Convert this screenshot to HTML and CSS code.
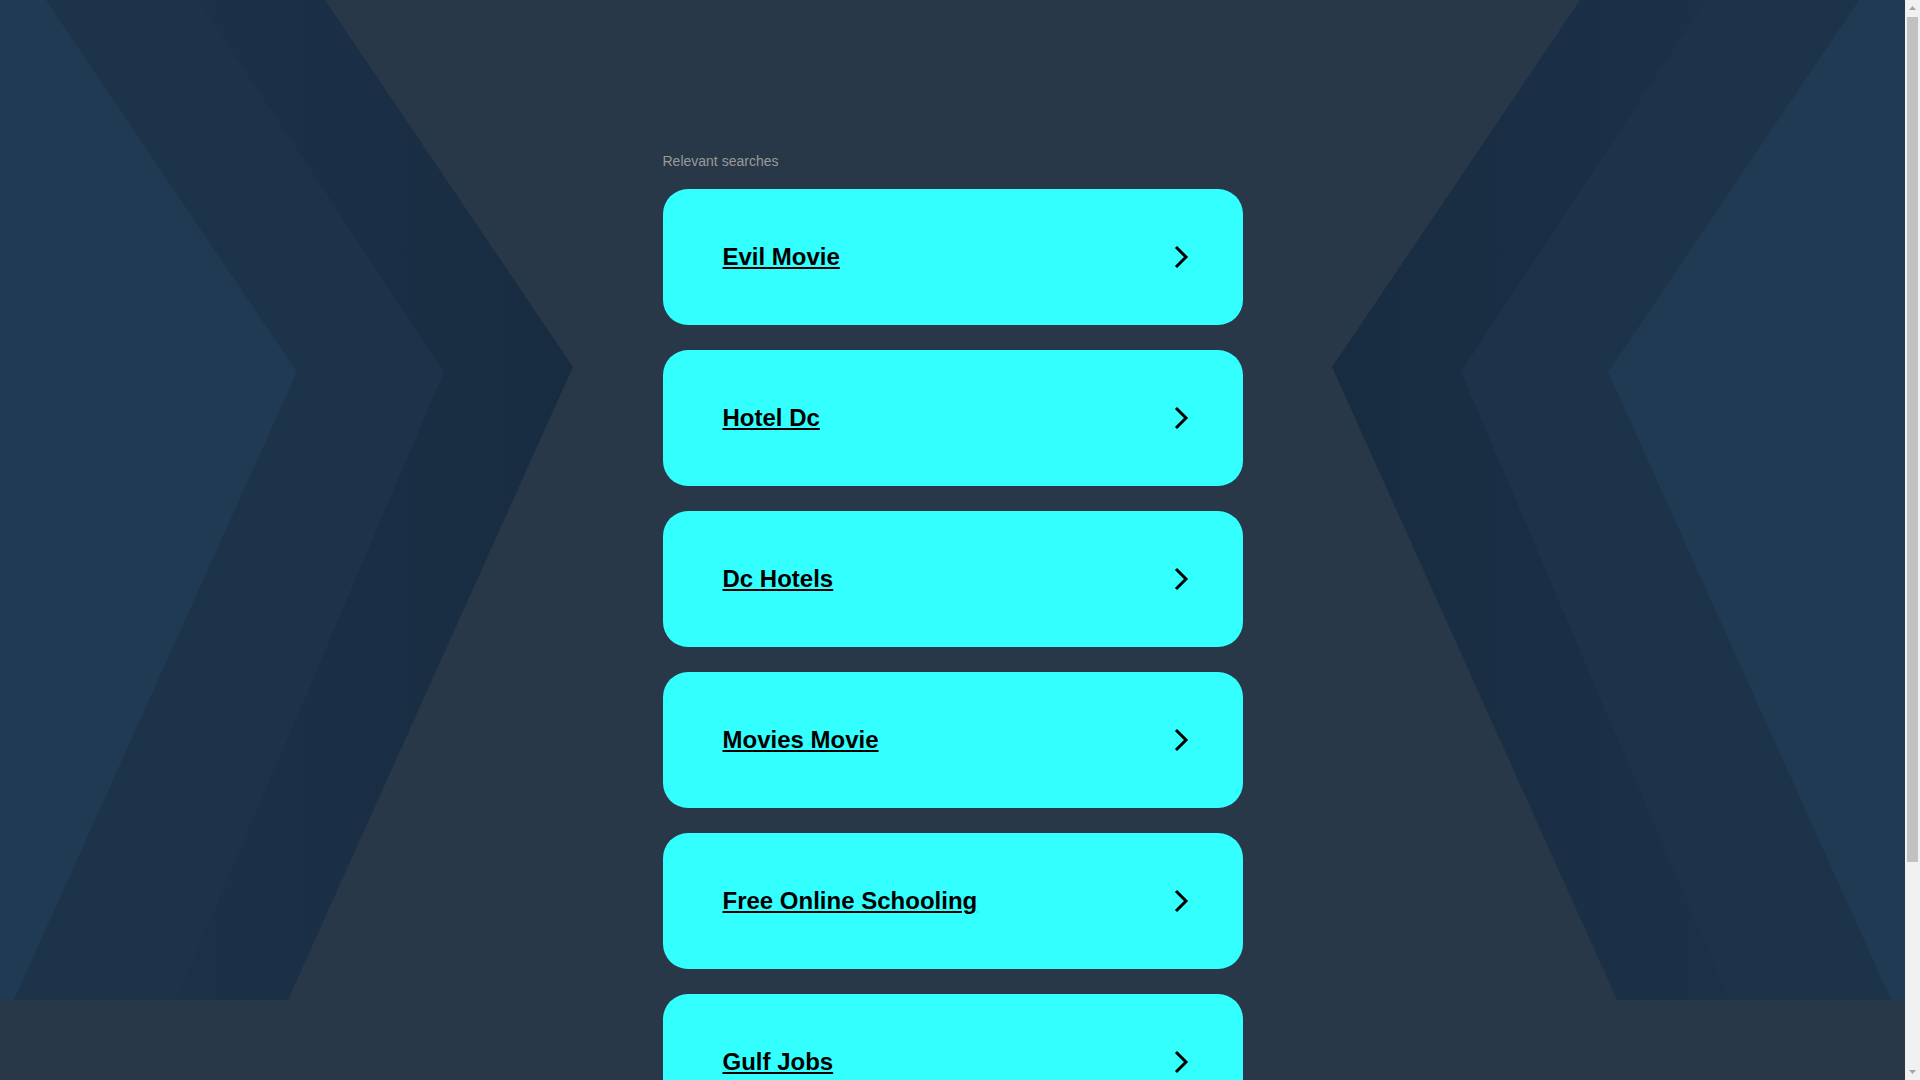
FILE: index.html
```html
<!DOCTYPE html>
<html lang="en">
<head>
<meta charset="utf-8">
<title>Relevant searches</title>
<link rel="stylesheet" href="styles.css">
</head>
<body>
<svg class="bg" viewBox="0 0 1905 1000" preserveAspectRatio="none" aria-hidden="true">
  <defs>
    <linearGradient id="gl" x1="0" y1="0" x2="1" y2="0">
      <stop offset="0" stop-color="#1d344b"/>
      <stop offset="1" stop-color="#182c41"/>
    </linearGradient>
    <linearGradient id="gr" x1="1" y1="0" x2="0" y2="0">
      <stop offset="0" stop-color="#1d344b"/>
      <stop offset="1" stop-color="#182c41"/>
    </linearGradient>
  </defs>
  <polygon points="0,0 325,0 573,367 288,1000 0,1000" fill="url(#gl)"/>
  <polygon points="0,0 199,0 444,372 176,1000 0,1000" fill="#1d334a"/>
  <polygon points="0,0 46,0 297,372 14,1000 0,1000" fill="#1f3a52"/>
  <polygon points="1905,0 1580,0 1332,367 1617,1000 1905,1000" fill="url(#gr)"/>
  <polygon points="1905,0 1706,0 1461,372 1729,1000 1905,1000" fill="#1d334a"/>
  <polygon points="1905,0 1859,0 1608,372 1891,1000 1905,1000" fill="#1f3a52"/>
</svg>
<main class="wrap">
  <p class="label">Relevant searches</p>
  <ul class="list">
    <li><a class="card" href="#"><span class="card-text">Evil Movie</span><svg class="chev" viewBox="0 0 16 24"><polyline points="3,2 13,12 3,22"/></svg></a></li>
    <li><a class="card" href="#"><span class="card-text">Hotel Dc</span><svg class="chev" viewBox="0 0 16 24"><polyline points="3,2 13,12 3,22"/></svg></a></li>
    <li><a class="card" href="#"><span class="card-text">Dc Hotels</span><svg class="chev" viewBox="0 0 16 24"><polyline points="3,2 13,12 3,22"/></svg></a></li>
    <li><a class="card" href="#"><span class="card-text">Movies Movie</span><svg class="chev" viewBox="0 0 16 24"><polyline points="3,2 13,12 3,22"/></svg></a></li>
    <li><a class="card" href="#"><span class="card-text">Free Online Schooling</span><svg class="chev" viewBox="0 0 16 24"><polyline points="3,2 13,12 3,22"/></svg></a></li>
    <li><a class="card" href="#"><span class="card-text">Gulf Jobs</span><svg class="chev" viewBox="0 0 16 24"><polyline points="3,2 13,12 3,22"/></svg></a></li>
  </ul>
</main>
<div class="scrollbar" aria-hidden="true">
  <div class="sb-btn"><svg viewBox="0 0 15 17"><polygon points="4,10 11,10 7.5,6"/></svg></div>
  <div class="sb-track"><div class="sb-thumb"></div></div>
  <div class="sb-btn"><svg viewBox="0 0 15 17"><polygon points="4,7 11,7 7.5,11"/></svg></div>
</div>
</body>
</html>
```

FILE: styles.css
```css
html, body {
  margin: 0;
  padding: 0;
}

body {
  position: relative;
  margin-right: 15px;
  background: #283848;
  font-family: "Liberation Sans", Arial, sans-serif;
}

html {
  background: #283848;
}

.bg {
  position: absolute;
  top: 0;
  left: 0;
  width: 100%;
  height: 1000px;
  z-index: 0;
  display: block;
}

.wrap {
  position: relative;
  z-index: 1;
  width: 580px;
  margin: 0 auto;
  padding: 153px 0 207px;
}

.label {
  margin: 0 0 20px;
  font-size: 14px;
  line-height: 16px;
  color: #999999;
}

.list {
  list-style: none;
  margin: 0;
  padding: 0;
  display: flex;
  flex-direction: column;
  gap: 25px;
}

.card {
  display: flex;
  align-items: center;
  justify-content: space-between;
  box-sizing: border-box;
  height: 136px;
  padding: 0 54px 0 60px;
  background: #33ffff;
  border-radius: 25px;
  color: #000000;
  font-size: 24px;
  font-weight: bold;
  text-decoration: none;
}

.card-text {
  text-decoration: underline;
}

.chev {
  width: 16px;
  height: 24px;
  fill: none;
  stroke: #000000;
  stroke-width: 3;
  stroke-linecap: butt;
  stroke-linejoin: miter;
}

.scrollbar {
  position: fixed;
  top: 0;
  right: 0;
  width: 15px;
  height: 100vh;
  display: flex;
  flex-direction: column;
  background: #f1f1f1;
  z-index: 10;
}

.sb-btn {
  height: 17px;
  flex: none;
}

.sb-btn svg {
  display: block;
  width: 15px;
  height: 17px;
  fill: #a3a3a3;
}

.sb-track {
  flex: 1;
  display: flex;
  flex-direction: column;
}

.sb-thumb {
  height: 845px;
  margin: 0 2px;
  background: #c1c1c1;
}
```
